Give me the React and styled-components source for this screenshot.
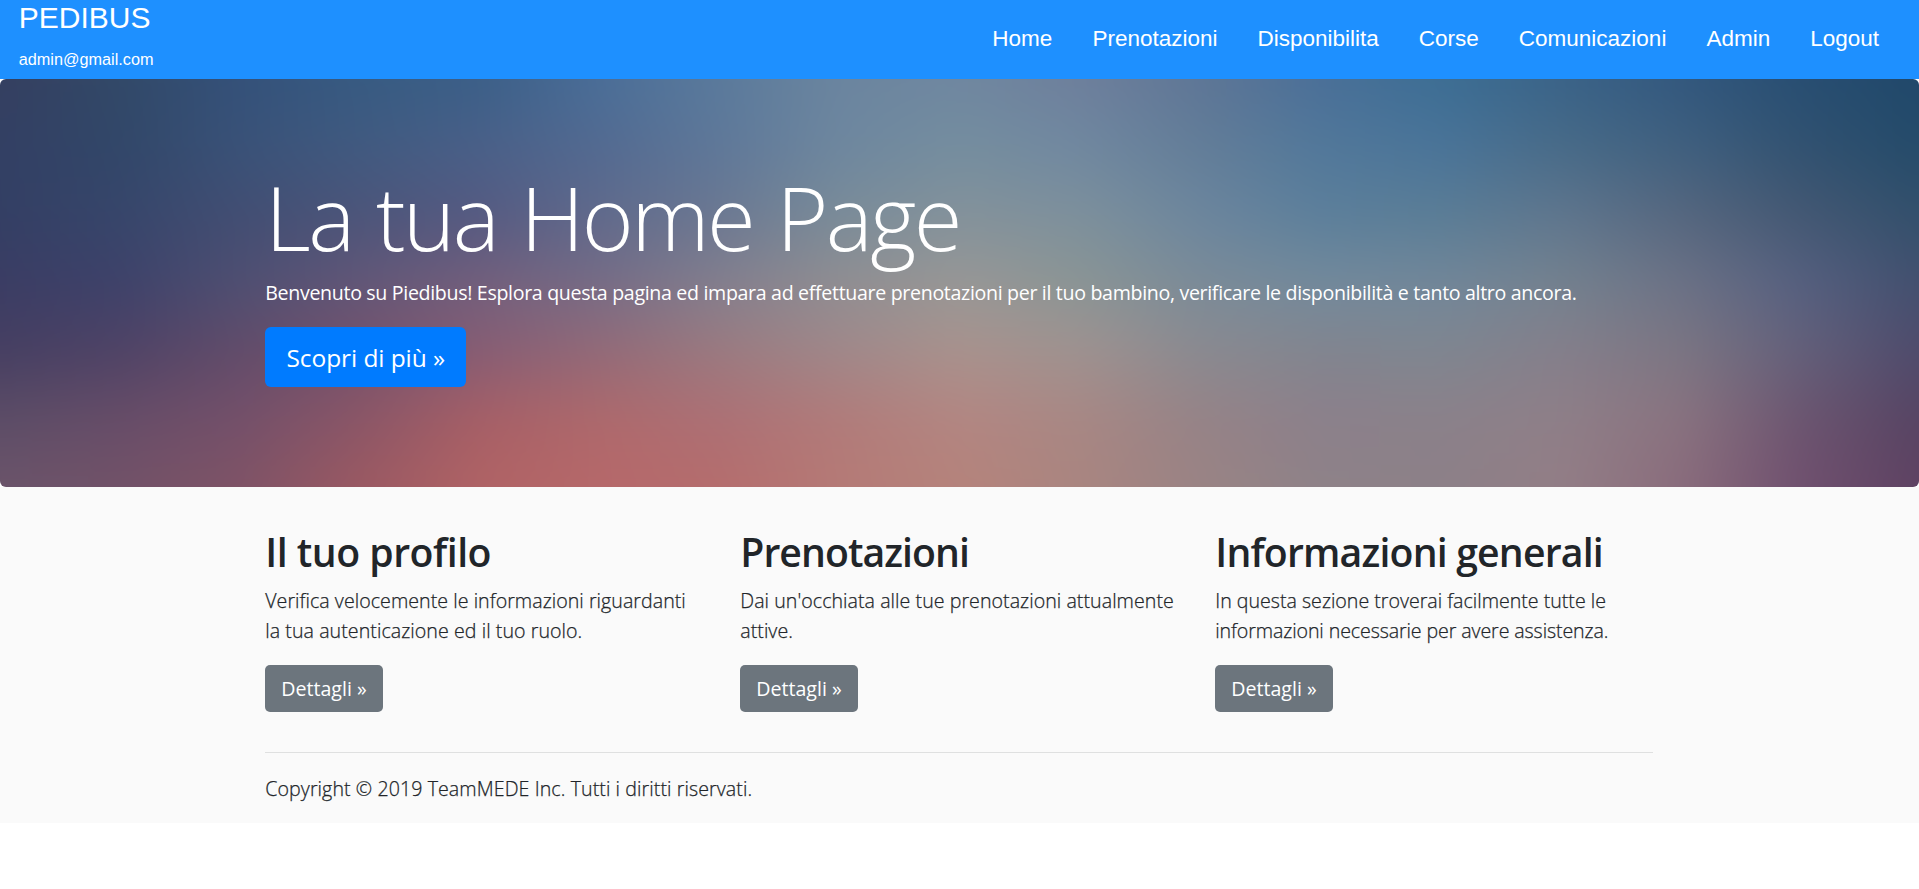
import React from "react";
import styled, { createGlobalStyle } from "styled-components";

const GlobalStyle = createGlobalStyle`
  *, *::before, *::after { box-sizing: border-box; }
  body {
    margin: 0;
    background: #fff;
    color: #212529;
    font-family: "Segoe UI", "Open Sans", "Noto Sans", sans-serif;
    font-size: 19.6px;
    font-weight: 300;
    line-height: 30px;
  }
  h1, h2, p { margin: 0; }
`;

const Header = styled.header`
  display: flex;
  justify-content: space-between;
  height: 79px;
  padding: 0 40px 0 18.75px;
  background: #1e90ff;
  color: #fff;
  font-family: "Liberation Sans", Arial, sans-serif;
  font-weight: 400;
`;

const Brand = styled.div`
  display: flex;
  flex-direction: column;
`;

const BrandName = styled.span`
  font-size: 30px;
  line-height: 35px;
`;

const BrandUser = styled.span`
  margin-top: 12px;
  font-size: 16.25px;
  line-height: 24px;
`;

const Nav = styled.nav`
  display: flex;
  align-items: center;
  gap: 40px;
  padding-bottom: 1px;
`;

const NavLink = styled.a`
  color: #fff;
  font-size: 22.5px;
  line-height: 28px;
  text-decoration: none;
`;

const Container = styled.div`
  width: 1388.5px;
  margin: 0 auto;
`;

const Hero = styled.section`
  position: relative;
  isolation: isolate;
  overflow: hidden;
  height: 408px;
  padding-top: 84px;
  border-radius: 6px;
  color: #fff;
`;

// The mesh is drawn larger than the hero so that the blur never reaches an edge.
const BLEED = 60;
const CELL_WIDTH = 120;
const CELL_HEIGHT = 68;

const Backdrop = styled.div`
  position: absolute;
  inset: -${BLEED}px;
  z-index: -1;
  filter: blur(20px);
`;

const Band = styled.div`
  position: absolute;
  inset: 0;
  background: linear-gradient(
    to right,
    ${(p) => p.$colors.map((c, i) => `${c} ${BLEED + i * CELL_WIDTH}px`).join(", ")}
  );
  mask-image: ${(p) =>
    p.$row > 0
      ? `linear-gradient(to bottom, transparent ${BLEED + (p.$row - 1) * CELL_HEIGHT}px, #000 ${
          BLEED + p.$row * CELL_HEIGHT
        }px)`
      : "none"};
`;

const HeroTitle = styled.h1`
  margin-bottom: 7px;
  font-size: 88.6px;
  font-weight: 300;
  line-height: 108px;
  letter-spacing: ${(p) => p.$tracking}px;
  word-spacing: 2.8px;
`;

const HeroText = styled.p`
  margin-bottom: 19px;
  font-weight: 400;
  white-space: nowrap;
  letter-spacing: ${(p) => p.$tracking}px;
`;

const Button = styled.a`
  display: inline-flex;
  align-items: center;
  justify-content: center;
  width: ${(p) => (p.$large ? 201 : 117.5)}px;
  height: ${(p) => (p.$large ? 60 : 47)}px;
  padding-top: ${(p) => (p.$large ? 2 : 0)}px;
  border-radius: ${(p) => (p.$large ? 6 : 5)}px;
  background: ${(p) => (p.$large ? "#007bff" : "#6c757d")};
  color: #fff;
  font-size: ${(p) => (p.$large ? 24.5 : 19.6)}px;
  font-weight: 400;
  letter-spacing: ${(p) => p.$tracking}px;
  white-space: nowrap;
`;

const Main = styled.main`
  height: 335.5px;
  background: #fafafa;
`;

const Columns = styled.div`
  display: grid;
  grid-template-columns: repeat(3, 437.5px);
  column-gap: 37.5px;
  padding-top: 41px;
`;

const Card = styled.article`
  display: flex;
  flex-direction: column;
  align-items: flex-start;
`;

const CardTitle = styled.h2`
  margin-bottom: 10px;
  font-size: 39.2px;
  font-weight: 600;
  line-height: 48px;
  letter-spacing: ${(p) => p.$tracking}px;
`;

const CardText = styled.p`
  margin-bottom: 19px;
  -webkit-text-stroke: 0.25px currentColor;
`;

const Line = styled.span`
  display: block;
  white-space: nowrap;
  letter-spacing: ${(p) => p.$tracking}px;
`;

const Divider = styled.hr`
  height: 1px;
  margin: 40px 1px 21px 0;
  border: 0;
  background: #dfe0e0;
`;

const Footer = styled.p`
  letter-spacing: ${(p) => p.$tracking}px;
  -webkit-text-stroke: 0.25px currentColor;
`;

const links = ["Home", "Prenotazioni", "Disponibilita", "Corse", "Comunicazioni", "Admin", "Logout"];

// Rows of the hero's colour mesh, from top to bottom.
const mesh = [
  ["#353f60", "#324968", "#34517a", "#375b82", "#3b5f88", "#4a6e98", "#5a7a9c", "#6b859f", "#6f87a0", "#6e7f9c", "#5e7696", "#4a6f98", "#3c6e94", "#3a6388", "#33587e", "#284e72", "#20486a"],
  ["#334064", "#324769", "#3a5278", "#415a80", "#4a6088", "#536a91", "#5f7899", "#6e879f", "#758e9f", "#7088a0", "#637d98", "#52789a", "#4a7499", "#486b88", "#40607f", "#325271", "#254b6a"],
  ["#343f64", "#37466b", "#424e73", "#4c557a", "#555a82", "#606a8c", "#6b7892", "#7a8c99", "#84929b", "#7d909c", "#6c869e", "#5c7f9b", "#5a7d96", "#5f768e", "#56677f", "#445873", "#33506c"],
  ["#3b3d64", "#3e426a", "#4f4f72", "#625778", "#735f7c", "#766c86", "#837f8e", "#908e92", "#989896", "#8a9595", "#7b8b98", "#738a9c", "#72879a", "#74828f", "#6c7286", "#566080", "#43506f"],
  ["#463f62", "#4f4366", "#624c6a", "#75526c", "#875d74", "#936a78", "#9b7a80", "#a0888a", "#a9928d", "#9f9290", "#8a8a90", "#82858f", "#7f8690", "#857f8b", "#7c7683", "#64607a", "#4f4b6c"],
  ["#5c4d67", "#674d68", "#74506a", "#8b5667", "#a75f66", "#ae696c", "#ad7075", "#b17b7a", "#b38682", "#a88784", "#968387", "#8c808b", "#8b818a", "#8f7f88", "#8a7380", "#6c5570", "#574463"],
  ["#6b546a", "#725268", "#7f5366", "#9b5962", "#b06365", "#b6686a", "#b56d6d", "#b57a76", "#b5837b", "#a98580", "#9a8384", "#8e8288", "#8c8088", "#937e86", "#8a6c7c", "#70506f", "#5e4262"],
];

const cards = [
  {
    title: "Il tuo profilo",
    tracking: -0.5,
    lines: [
      ["Verifica velocemente le informazioni riguardanti", 0.045],
      ["la tua autenticazione ed il tuo ruolo.", 0.06],
    ],
  },
  {
    title: "Prenotazioni",
    tracking: -0.95,
    lines: [
      ["Dai un'occhiata alle tue prenotazioni attualmente", 0.05],
      ["attive.", 0.05],
    ],
  },
  {
    title: "Informazioni generali",
    tracking: -0.82,
    lines: [
      ["In questa sezione troverai facilmente tutte le", 0],
      ["informazioni necessarie per avere assistenza.", -0.1],
    ],
  },
];

export default function App() {
  return (
    <>
      <GlobalStyle />
      <Header>
        <Brand>
          <BrandName>PEDIBUS</BrandName>
          <BrandUser>admin@gmail.com</BrandUser>
        </Brand>
        <Nav>
          {links.map((label) => (
            <NavLink key={label}>{label}</NavLink>
          ))}
        </Nav>
      </Header>
      <Hero>
        <Backdrop>
          {mesh.map((colors, row) => (
            <Band key={row} $colors={colors} $row={row} />
          ))}
        </Backdrop>
        <Container>
          <HeroTitle $tracking={-2.5}>La tua Home Page</HeroTitle>
          <HeroText $tracking={-0.326}>
            Benvenuto su Piedibus! Esplora questa pagina ed impara ad effettuare prenotazioni per il tuo
            bambino, verificare le disponibilità e tanto altro ancora.
          </HeroText>
          <Button $large $tracking={-0.08}>Scopri di più »</Button>
        </Container>
      </Hero>
      <Main>
        <Container>
          <Columns>
            {cards.map((card) => (
              <Card key={card.title}>
                <CardTitle $tracking={card.tracking}>{card.title}</CardTitle>
                <CardText>
                  {card.lines.map(([text, tracking]) => (
                    <Line key={text} $tracking={tracking}>{text}</Line>
                  ))}
                </CardText>
                <Button $tracking={0}>Dettagli »</Button>
              </Card>
            ))}
          </Columns>
          <Divider />
          <Footer $tracking={0.085}>Copyright © 2019 TeamMEDE Inc. Tutti i diritti riservati.</Footer>
        </Container>
      </Main>
    </>
  );
}
